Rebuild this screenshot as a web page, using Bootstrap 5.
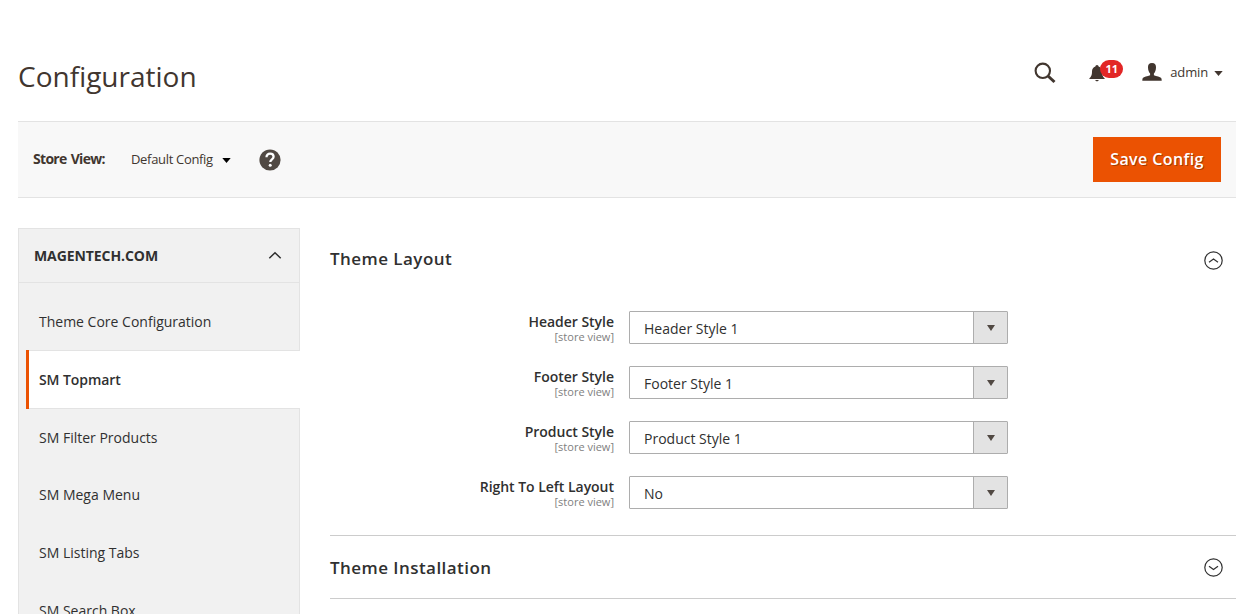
<!DOCTYPE html>
<html lang="en">
<head>
<meta charset="utf-8">
<meta name="viewport" content="width=device-width, initial-scale=1">
<title>Configuration</title>
<link href="https://cdn.jsdelivr.net/npm/bootstrap@5.3.0/dist/css/bootstrap.min.css" rel="stylesheet">
<style>
  body { font-family: "Open Sans", sans-serif; font-size: 14px; line-height: 1.36; color: #303030; height: 614px; overflow: hidden; }
  .page { padding: 0 20px 0 18px; }
  .page-top { height: 121px; padding-right: 13px; }
  .page-title { font-size: 28px; font-weight: 400; line-height: 1.2; color: #41362f; margin-top: 60px; }
  .tools { margin-top: 55px; height: 36px; color: #41362f; }
  .user-name { font-size: 13px; letter-spacing: -.15px; margin-left: 8px; margin-right: 6px; }
  .alerts { width: 53px; margin-left: 33px; }
  .count { background: #e22626; font-size: 11px; font-weight: 700; line-height: 18px; width: 23px; height: 18px; left: 11px; top: -5px; border-radius: 9px; }
  .toolbar { height: 77px; background: #f8f8f8; border-top: 1px solid #e3e3e3; border-bottom: 1px solid #e3e3e3; padding: 0 15px; }
  .scope-label { color: #41362f; font-weight: 700; letter-spacing: -.7px; word-spacing: 1.2px; width: 98px; padding-bottom: 2px; }
  .scope-value { font-size: 13px; color: #41362f; letter-spacing: -.32px; }
  .scope-caret { margin-left: 9px; margin-top: 2px; }
  .help { margin-left: 28px; }
  .btn-save { --bs-btn-color: #fff; --bs-btn-bg: #eb5202; --bs-btn-border-color: #eb5202; --bs-btn-border-radius: 0; width: 128px; height: 45px; padding: 0 0 2px; font-size: 16px; font-weight: 600; letter-spacing: .4px; text-shadow: 1px 1px 0 rgba(0,0,0,.3); }
  .side { width: 282px; height: 420px; background: #f1f1f1; border: 1px solid #e3e3e3; }
  .side-title { height: 54px; border-bottom: 1px solid #e3e3e3; padding: 0 17px 0 15px; font-weight: 700; letter-spacing: -.08px; }
  .side-list { padding: 10px 0 0 7px; }
  .side-item { height: 57.7px; padding-left: 13px; color: #303030; text-decoration: none; }
  .side-item.current { height: 59px; margin: -1px -1px -.3px 0; padding-top: 1px; background: #fff; border: solid #e3e3e3; border-width: 1px 0; font-weight: 600; letter-spacing: -.08px; position: relative; }
  .side-item.current::before { content: ""; position: absolute; left: 0; top: -1px; bottom: -1px; width: 3px; background: #eb5202; }
  .columns { gap: 30px; padding-top: 30px; }
  .section-title { font-size: 17px; font-weight: 600; letter-spacing: .45px; line-height: 24px; margin: 0; }
  .section-head { height: 63px; padding-right: 13px; }
  .section-head.opened .section-title { padding-bottom: 2px; }
  .section-head.closed .section-title { padding-top: 2px; }
  .fields { height: 244px; padding-top: 20px; }
  .field-row { height: 55px; }
  .field-label { width: 284px; margin-right: 15px; padding-top: 2px; font-weight: 600; line-height: 18px; letter-spacing: -.03px; }
  .field-scope { font-size: 11px; font-weight: 400; color: #808080; line-height: 13px; margin-top: -1px; letter-spacing: 0; }
  .picker { width: 379px; height: 33px; border: 1px solid #adadad; border-radius: 1px; }
  .picker-value { padding: 2px 0 0 14px; }
  .picker-arrow { width: 34px; background: #e3e3e3; border-left: 1px solid #adadad; }
  .section-rule { border-top: 1px solid #ccc; }
</style>
</head>
<body class="bg-white">
<div class="page">
  <header class="page-top d-flex justify-content-between align-items-start">
    <h1 class="page-title mb-0">Configuration</h1>
    <div class="tools d-flex align-items-center">
      <svg width="22" height="22" viewBox="0 0 22 22" fill="none" stroke="#41362f"><circle cx="8.800" cy="8.800" r="7.200" stroke-width="2.100"/><path d="M14 14l6.500 6" stroke-width="3"/></svg>
      <div class="alerts position-relative d-flex">
        <svg width="16" height="17" viewBox="0 0 16 17" fill="#41362f"><path d="M8 0C6.900 0 6.500.8 6.400 1.500 4.100 2.200 3 4.200 3 6.500c0 4-1 5.400-2.600 6.700V14h15.200v-.8C14 11.900 13 10.500 13 6.500c0-2.300-1.100-4.300-3.400-5C9.500.8 9.100 0 8 0zM6.200 15c.3.800 1 1.300 1.800 1.300s1.500-.5 1.800-1.300z"/></svg>
        <span class="count position-absolute text-white text-center">11</span>
      </div>
      <svg width="20" height="18" viewBox="0 0 20 18" fill="#41362f" style="margin-top:-2px"><path d="M10 0C7 0 5.800 2 6 4.600c.1 2.700.9 4.900 2.100 5.900v1.700C5.500 13.100 1.800 13.700.8 15c-.4.700-.5 1.700-.5 2.700h19.400c0-1-.1-2-.5-2.700-1-1.300-4.700-1.900-7.300-2.800v-1.700c1.200-1 2-3.200 2.100-5.900C14.200 2 13 0 10 0z"/></svg>
      <span class="user-name">admin</span>
      <svg width="9" height="5" viewBox="0 0 9 5" fill="#41362f"><path d="M.3 0h8.400L4.500 5z"/></svg>
    </div>
  </header>

  <div class="toolbar d-flex align-items-center">
    <span class="scope-label">Store View:</span>
    <span class="scope-value">Default Config</span>
    <svg class="scope-caret" width="9" height="5" viewBox="0 0 9 5"><path d="M.3 0h8.400L4.500 5z"/></svg>
    <svg class="help" width="22" height="22" viewBox="0 0 22 22"><circle cx="11" cy="11" r="10.600" fill="#514943"/><path d="M7.500 8.300C7.500 5.900 9 4.700 11.100 4.700s3.500 1.200 3.500 3.100c0 2.500-3.300 2.600-3.300 5.200" fill="none" stroke="#fff" stroke-width="2.300"/><circle cx="11.200" cy="16.300" r="1.500" fill="#fff"/></svg>
    <button type="button" class="btn btn-save ms-auto">Save Config</button>
  </div>

  <div class="columns d-flex">
    <nav class="side flex-shrink-0">
      <div class="side-title d-flex justify-content-between align-items-center">
        <span>MAGENTECH.COM</span>
        <svg width="14" height="9" viewBox="0 0 14 9" fill="none" stroke="#303030" stroke-width="1.500"><path d="M1.300 7.300L7 1.700l5.700 5.600"/></svg>
      </div>
      <div class="side-list d-flex flex-column">
        <a class="side-item d-flex align-items-center flex-shrink-0" href="#">Theme Core Configuration</a>
        <a class="side-item current d-flex align-items-center flex-shrink-0" href="#">SM Topmart</a>
        <a class="side-item d-flex align-items-center flex-shrink-0" href="#">SM Filter Products</a>
        <a class="side-item d-flex align-items-center flex-shrink-0" href="#">SM Mega Menu</a>
        <a class="side-item d-flex align-items-center flex-shrink-0" href="#">SM Listing Tabs</a>
        <a class="side-item d-flex align-items-center flex-shrink-0" href="#">SM Search Box</a>
      </div>
    </nav>

    <main class="flex-grow-1">
      <div class="section-head opened d-flex justify-content-between align-items-center">
        <h2 class="section-title">Theme Layout</h2>
        <svg width="19" height="20" viewBox="0 0 19 20" fill="none" stroke="#303030" stroke-width="1.200"><circle cx="9.500" cy="10.500" r="8.700"/><path d="M5 12.200l4.500-3.300 4.500 3.300"/></svg>
      </div>
      <div class="fields">
        <div class="field-row d-flex align-items-start">
          <div class="field-label text-end">Header Style<div class="field-scope">[store view]</div></div>
          <div class="picker d-flex"><div class="picker-value flex-grow-1 d-flex align-items-center">Header Style 1</div><div class="picker-arrow d-flex align-items-center justify-content-center"><svg width="8" height="6" viewBox="0 0 8 6" fill="#514943"><path d="M0 0h8L4 6z"/></svg></div></div>
        </div>
        <div class="field-row d-flex align-items-start">
          <div class="field-label text-end">Footer Style<div class="field-scope">[store view]</div></div>
          <div class="picker d-flex"><div class="picker-value flex-grow-1 d-flex align-items-center">Footer Style 1</div><div class="picker-arrow d-flex align-items-center justify-content-center"><svg width="8" height="6" viewBox="0 0 8 6" fill="#514943"><path d="M0 0h8L4 6z"/></svg></div></div>
        </div>
        <div class="field-row d-flex align-items-start">
          <div class="field-label text-end">Product Style<div class="field-scope">[store view]</div></div>
          <div class="picker d-flex"><div class="picker-value flex-grow-1 d-flex align-items-center">Product Style 1</div><div class="picker-arrow d-flex align-items-center justify-content-center"><svg width="8" height="6" viewBox="0 0 8 6" fill="#514943"><path d="M0 0h8L4 6z"/></svg></div></div>
        </div>
        <div class="field-row d-flex align-items-start">
          <div class="field-label text-end">Right To Left Layout<div class="field-scope">[store view]</div></div>
          <div class="picker d-flex"><div class="picker-value flex-grow-1 d-flex align-items-center">No</div><div class="picker-arrow d-flex align-items-center justify-content-center"><svg width="8" height="6" viewBox="0 0 8 6" fill="#514943"><path d="M0 0h8L4 6z"/></svg></div></div>
        </div>
      </div>
      <div class="section-rule section-head closed d-flex justify-content-between align-items-center">
        <h2 class="section-title">Theme Installation</h2>
        <svg width="19" height="20" viewBox="0 0 19 20" fill="none" stroke="#303030" stroke-width="1.200"><circle cx="9.500" cy="10.500" r="8.700"/><path d="M5 9.200l4.500 3.300 4.500-3.300"/></svg>
      </div>
      <div class="section-rule"></div>
    </main>
  </div>
</div>
<script src="https://cdn.jsdelivr.net/npm/bootstrap@5.3.0/dist/js/bootstrap.bundle.min.js"></script>
</body>
</html>
